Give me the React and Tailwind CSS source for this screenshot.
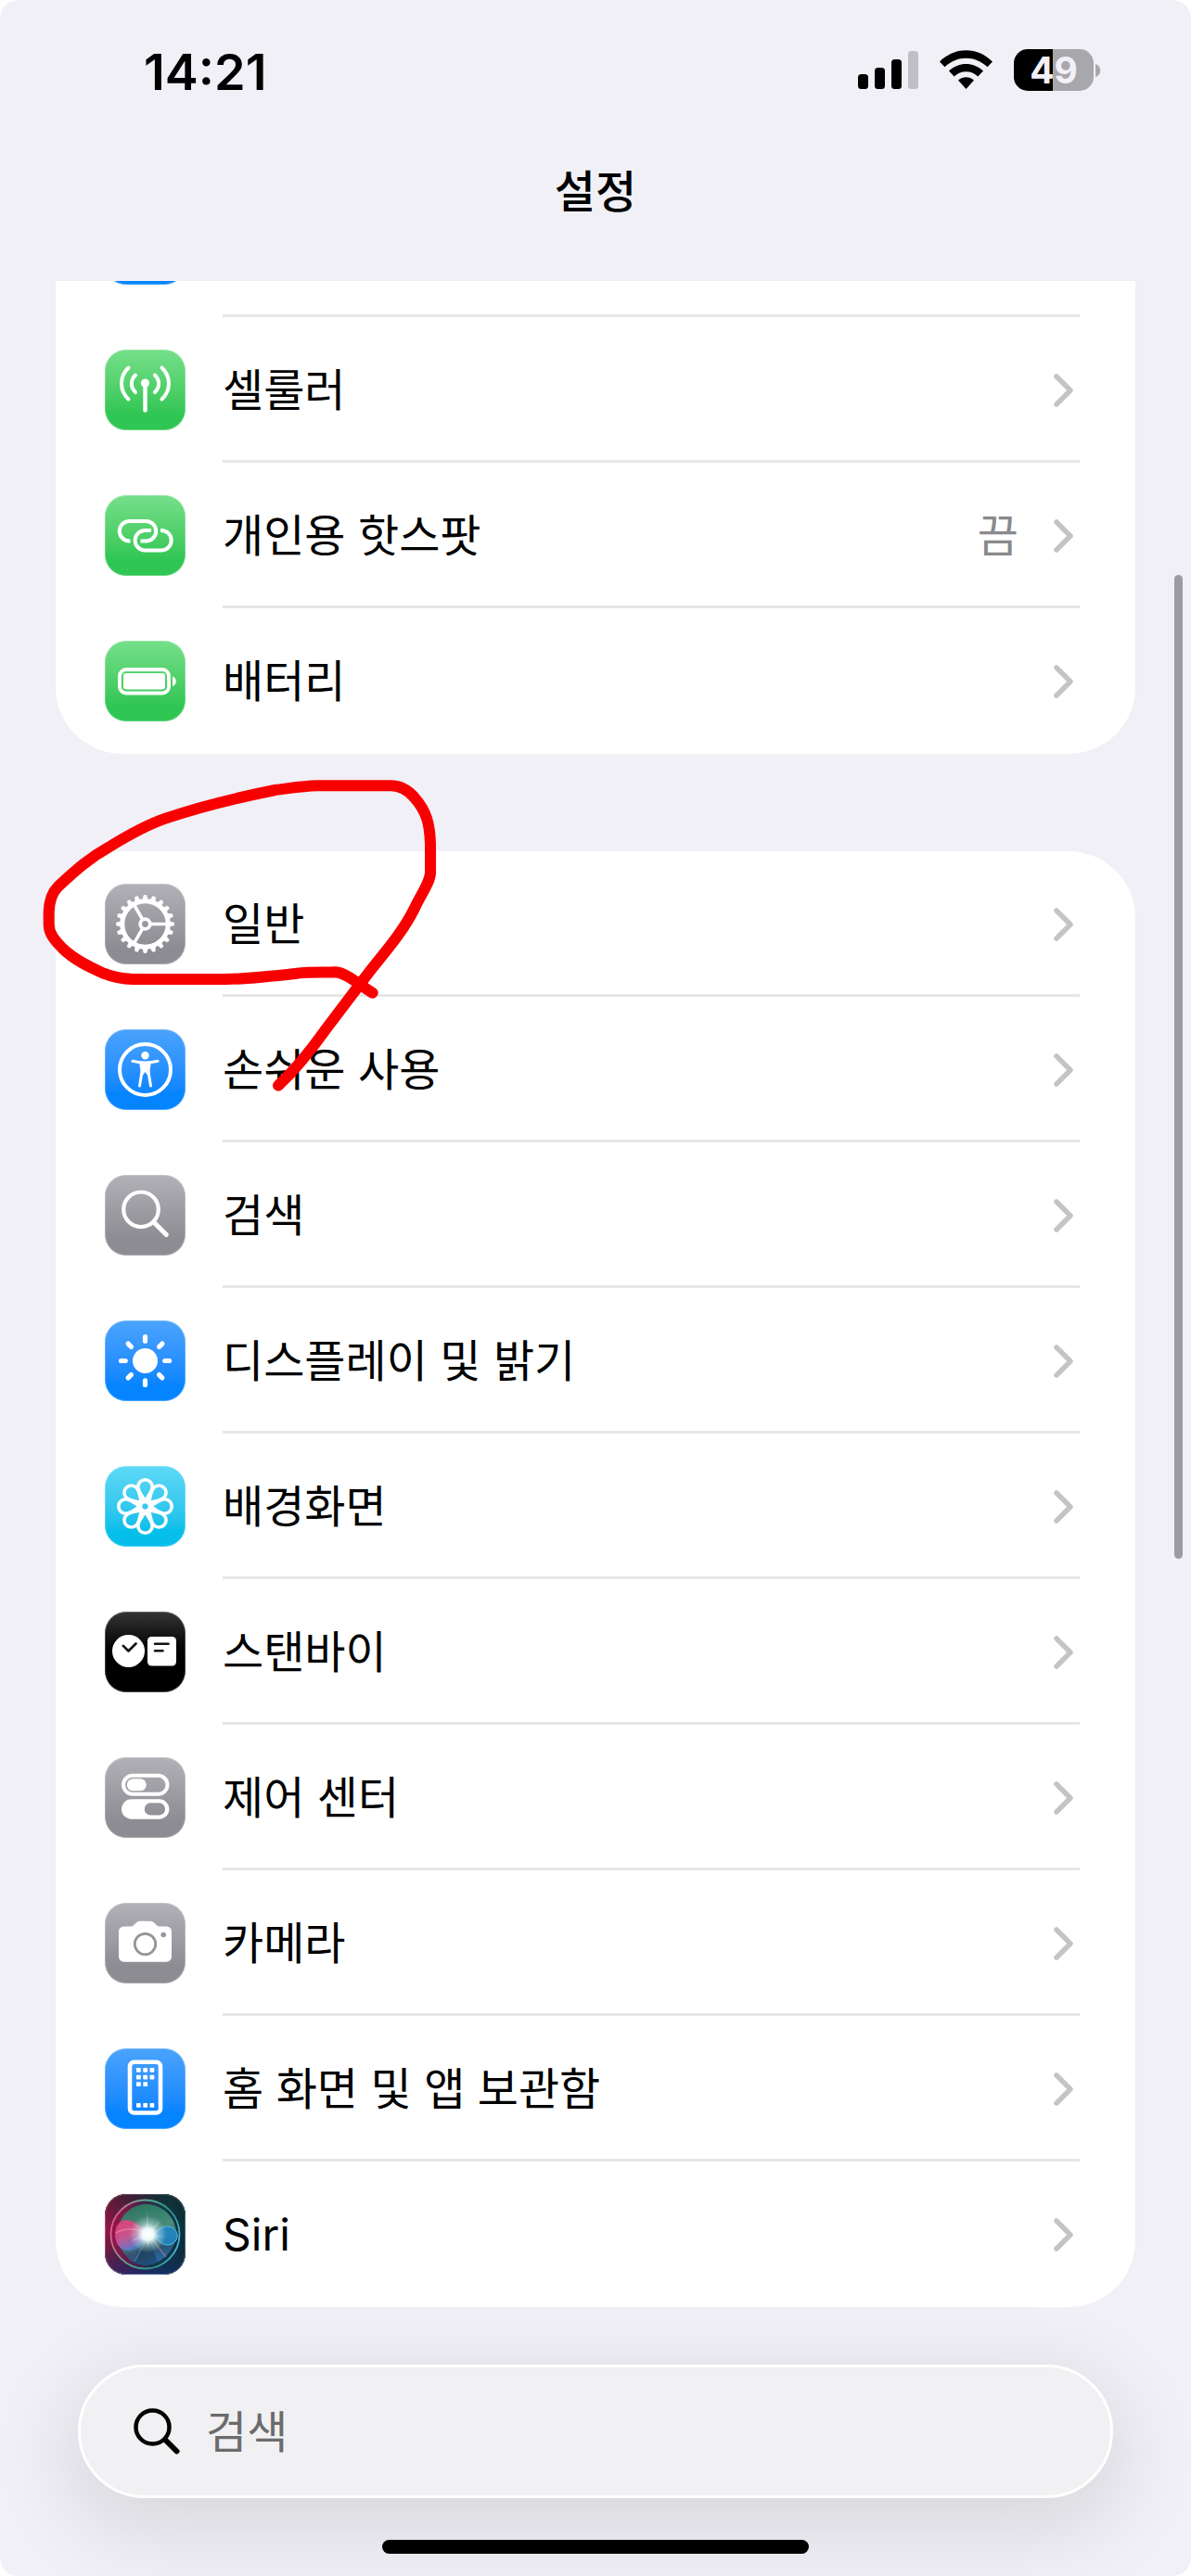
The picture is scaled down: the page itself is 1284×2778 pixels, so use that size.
import React from "react";

const EIGHTHS = [0, 45, 90, 135, 180, 225, 270, 315];
const TEETH = Array.from({ length: 20 }, (_, i) => i * 18);

const line = {
  fill: "none",
  stroke: "#fff",
  strokeWidth: 4,
  strokeLinecap: "round",
  strokeLinejoin: "round",
};

const TILE = {
  green: "bg-linear-to-b from-[#75df8a] to-[#2fc653] to-80%",
  gray: "bg-linear-to-b from-[#b2b1b7] to-[#8d8c92] to-80%",
  blue: "bg-linear-to-b from-[#4aa3fc] to-[#0584ff] to-80%",
  cyan: "bg-linear-to-b from-[#5cd9f6] to-[#05bfea] to-80%",
  black: "bg-linear-to-b from-[#363636] to-black to-70%",
  siri: "bg-black",
};

function Tile({ tone, children }) {
  return (
    <span className={`block size-[87px] shrink-0 overflow-hidden rounded-[23px] ${TILE[tone]}`}>
      <svg viewBox="0 0 87 87" className="size-full" aria-hidden="true">
        {children}
        <rect x="0.5" y="0.5" width="86" height="86" rx="22.5" fill="none" stroke="#fff" strokeOpacity="0.25" />
      </svg>
    </span>
  );
}

const Cellular = () => (
  <g {...line}>
    <circle cx="43.5" cy="36" r="4.6" fill="#fff" stroke="none" />
    <path d="M43.5 38V65.500" strokeWidth="4.5" />
    <path d="M25.500 19.500C15.500 29 15.500 44 25.500 53.500M61.500 19.500C71.500 29 71.500 44 61.500 53.500" />
    <path d="M33 27.500C27.500 33 27.500 40.500 33 46M54 27.500C59.500 33 59.500 40.500 54 46" />
  </g>
);

const Hotspot = () => (
  <g {...line} strokeLinecap="butt">
    <path d="M27.500 49.400H26.500A10.700 10.700 0 0 1 26.500 28H44.500A10.700 10.700 0 0 1 44.500 49.400H38.500" />
    <path d="M60 38H61A10.700 10.700 0 0 1 61 59.400H43.300A10.700 10.700 0 0 1 43.300 38H50" />
  </g>
);

const Battery = () => (
  <g>
    <rect x="16" y="31" width="53" height="25.500" rx="7" {...line} strokeWidth="3.8" />
    <rect x="20" y="35" width="45" height="17.500" rx="3" fill="#fff" />
    <path d="M73 38.500C78 40 78 47.500 73 49Z" fill="#fff" />
  </g>
);

const Gear = () => (
  <g transform="translate(43.500 43.500)" {...line} strokeLinecap="butt">
    <circle r="24.700" strokeWidth="5" />
    {TEETH.map((a) => (
      <path key={a} d="M26.500 -2.600L31 -1.500V1.500L26.500 2.600Z" fill="#fff" stroke="#fff" strokeWidth="0.6" transform={`rotate(${a})`} />
    ))}
    <circle r="5.300" strokeWidth="3.800" />
    {[0, 120, 240].map((a) => (
      <path key={a} d="M6.500 0H24" strokeWidth="3.600" transform={`rotate(${a})`} />
    ))}
  </g>
);

const Access = () => (
  <g>
    <circle cx="43.500" cy="43.500" r="27.500" {...line} />
    <circle cx="43.500" cy="28.300" r="4.200" fill="#fff" />
    <path
      d="M30 34.300C34 35.400 38 36 43.500 36S53 35.400 57 34.300M38.500 36.500C40.500 42 40 46 39.500 49L37.500 61M48.500 36.500C46.500 42 47 46 47.500 49L49.500 61"
      {...line}
      strokeWidth="3"
    />
    <path d="M38 35.500H49L47.500 49.500H46L43.500 46L41 49.500H39.500Z" fill="#fff" />
  </g>
);

const Search = () => (
  <g {...line}>
    <circle cx="39" cy="37.300" r="18.800" strokeWidth="4.200" />
    <path d="M52.800 51L66.300 64.500" strokeWidth="5" />
  </g>
);

const Sun = () => (
  <g transform="translate(43.500 43.500)" {...line}>
    <circle r="13.500" fill="#fff" stroke="none" />
    {EIGHTHS.map((a) => (
      <path key={a} d="M21.300 0H26" strokeWidth="5.200" transform={`rotate(${a})`} />
    ))}
  </g>
);

const Flower = () => (
  <g transform="translate(43.500 43.500)" {...line} strokeWidth="3.600">
    {EIGHTHS.map((a) => (
      <path
        key={a}
        d="M0 -5C-2.500 -11 -7.700 -15.500 -7.700 -21A7.700 7.700 0 0 1 7.700 -21C7.700 -15.500 2.500 -11 0 -5Z"
        transform={`rotate(${a})`}
      />
    ))}
    <circle r="5" />
  </g>
);

const Standby = () => (
  <g>
    <circle cx="25.500" cy="42.500" r="17.500" fill="#fff" />
    <rect x="46" y="27" width="31" height="31.500" rx="4.500" fill="#fff" />
    <path d="M19.800 36.800L25.500 42.500L33.500 34.500M54 34.700H68.500M54 42.200H62.500" {...line} stroke="#111" strokeWidth="2.600" />
  </g>
);

const Toggles = () => (
  <g>
    <rect x="20" y="19.800" width="47.500" height="20" rx="10" {...line} />
    <rect x="23.800" y="23.300" width="21" height="13" rx="6.500" fill="#fff" />
    <path
      fillRule="evenodd"
      fill="#fff"
      d="M28.700 45.300H58.700A10.700 10.700 0 0 1 58.700 66.700H28.700A10.700 10.700 0 0 1 28.700 45.300ZM49.300 49.300A6.600 6.600 0 0 0 49.300 62.500H58.500A6.600 6.600 0 0 0 58.500 49.300Z"
    />
  </g>
);

const Camera = () => (
  <g>
    <path
      fill="#fff"
      d="M20.500 25.500H28C32 25.500 33 19.700 38 19.700H49C54 19.700 55 25.500 59 25.500H66.500A5.500 5.500 0 0 1 72 31V58.200A5.500 5.500 0 0 1 66.500 63.700H20.500A5.500 5.500 0 0 1 15 58.200V31A5.500 5.500 0 0 1 20.500 25.500Z"
    />
    <circle cx="43.500" cy="44.500" r="11.200" fill="#fff" stroke="#95949a" strokeWidth="2.800" />
    <circle cx="63.200" cy="34.500" r="2.800" fill="#97969c" />
  </g>
);

const Phone = () => (
  <g fill="#fff">
    <rect x="27" y="14.700" width="33" height="54.800" rx="4.500" {...line} strokeWidth="4.600" />
    {[
      [34, 21], [41.300, 21], [48.500, 21],
      [34, 28.700], [41.300, 28.700], [48.500, 28.700],
      [34, 36.300], [41.300, 36.300],
      [34, 59], [41.300, 59], [48.500, 59],
    ].map(([x, y]) => (
      <rect key={`${x}-${y}`} x={x} y={y} width="4.800" height="4.800" rx="0.800" />
    ))}
  </g>
);

const Siri = () => (
  <g>
    <defs>
      <linearGradient id="siri-back" x1="0" y1="0.4" x2="1" y2="0.5">
        <stop offset="0" stopColor="#9c1446" />
        <stop offset="0.35" stopColor="#571c4c" />
        <stop offset="0.7" stopColor="#123a4a" />
        <stop offset="1" stopColor="#08303c" />
      </linearGradient>
      <linearGradient id="siri-base" x1="0" y1="0" x2="0" y2="1">
        <stop offset="0" stopColor="#12251f" stopOpacity="0.5" />
        <stop offset="0.45" stopColor="#12251f" stopOpacity="0" />
        <stop offset="1" stopColor="#152a70" stopOpacity="0.65" />
      </linearGradient>
      <linearGradient id="siri-green" x1="0.3" y1="0" x2="0.6" y2="1">
        <stop offset="0" stopColor="#23855f" />
        <stop offset="0.45" stopColor="#559985" />
        <stop offset="0.75" stopColor="#2c5c78" />
        <stop offset="1" stopColor="#2f74c4" />
      </linearGradient>
      <linearGradient id="siri-ring" x1="0" y1="0.3" x2="1" y2="0.6">
        <stop offset="0" stopColor="#ef6a95" />
        <stop offset="0.4" stopColor="#58c39a" />
        <stop offset="0.75" stopColor="#2f9f92" />
        <stop offset="1" stopColor="#59c8ee" />
      </linearGradient>
      <linearGradient id="siri-pink" x1="0" y1="0" x2="0.4" y2="1">
        <stop offset="0" stopColor="#e83a75" />
        <stop offset="0.6" stopColor="#cf5391" />
        <stop offset="1" stopColor="#6b74cc" />
      </linearGradient>
      <radialGradient id="siri-glow">
        <stop offset="0" stopColor="#fff" />
        <stop offset="0.32" stopColor="#f4ffff" stopOpacity="0.95" />
        <stop offset="0.6" stopColor="#cfeef0" stopOpacity="0.45" />
        <stop offset="1" stopColor="#cfeef0" stopOpacity="0" />
      </radialGradient>
    </defs>
    <rect width="87" height="87" fill="url(#siri-back)" />
    <rect width="87" height="87" fill="url(#siri-base)" />
    <circle cx="43.500" cy="43.500" r="37" fill="url(#siri-back)" stroke="url(#siri-ring)" strokeWidth="1.800" strokeOpacity="0.85" />
    <path d="M15 36C18 18 36 8 52 12C68 16 78 30 77 44C76 62 60 76 44 77C30 77 20 66 16 56Z" fill="url(#siri-green)" opacity="0.85" />
    <path d="M46 45L58 76C49 80 38 79 30 74Z" fill="#153149" opacity="0.45" />
    <path d="M46 45C34 52 20 60 14 52C18 66 36 66 46 45Z" fill="#4b83c9" opacity="0.7" />
    <path d="M46 44C38 32 26 25 17 30C9 35 9 52 17 58C27 64 38 54 46 44Z" fill="url(#siri-pink)" opacity="0.92" />
    <path d="M46 44C38 38 25 35 12 42" fill="none" stroke="#ff8fb4" strokeWidth="1.200" opacity="0.7" />
    <path d="M48 44C58 40 62 34 69 35C76 36 79 42 78 47C76 55 67 57 61 53C57 49 54 46 48 44Z" fill="#2187c4" fillOpacity="0.85" stroke="#56bff0" strokeWidth="1" />
    <path d="M47 45L32 73" stroke="#79b7e3" strokeWidth="1.200" opacity="0.5" />
    <path d="M48 45L66 68" stroke="#e78a9d" strokeWidth="1.400" opacity="0.5" />
    <path d="M46 18L47.500 40L60 28L50 43L64 46L50 47L46 58L44 47L28 51L42 43L31 32L44 40Z" fill="#e8ffff" opacity="0.25" />
    <circle cx="46.500" cy="43.500" r="20" fill="url(#siri-glow)" />
  </g>
);

const CONNECTIVITY = [
  { label: "셀룰러", tone: "green", Icon: Cellular },
  { label: "개인용 핫스팟", tone: "green", Icon: Hotspot, value: "끔" },
  { label: "배터리", tone: "green", Icon: Battery },
];

const GENERAL = [
  { label: "일반", tone: "gray", Icon: Gear },
  { label: "손쉬운 사용", tone: "blue", Icon: Access },
  { label: "검색", tone: "gray", Icon: Search },
  { label: "디스플레이 및 밝기", tone: "blue", Icon: Sun },
  { label: "배경화면", tone: "cyan", Icon: Flower },
  { label: "스탠바이", tone: "black", Icon: Standby },
  { label: "제어 센터", tone: "gray", Icon: Toggles },
  { label: "카메라", tone: "gray", Icon: Camera },
  { label: "홈 화면 및 앱 보관함", tone: "blue", Icon: Phone },
  { label: "Siri", tone: "siri", Icon: Siri },
];

function Row({ label, tone, Icon, value, last }) {
  return (
    <li>
      <button type="button" className="flex h-[157px] w-full items-center gap-10 pr-[60px] pl-[53px] text-left">
        <Tile tone={tone}>
          <Icon />
        </Tile>
        <span
          className={`flex h-full flex-1 items-center border-y-[3px] border-t-transparent pr-[7px] ${
            last ? "border-b-transparent" : "border-b-[#e6e6e6]"
          }`}
        >
          <span className="flex-1">{label}</span>
          {value && <span className="mr-[38px] text-[#8a8a8e]">{value}</span>}
          <svg viewBox="0 0 21 36" className="h-9 w-[21px]" aria-hidden="true">
            <path d="M3 3L18 18L3 33" fill="none" stroke="#c4c4c6" strokeWidth="5.500" strokeLinecap="round" strokeLinejoin="round" />
          </svg>
        </span>
      </button>
    </li>
  );
}

function Rows({ items }) {
  return (
    <ul>
      {items.map((item, i) => (
        <Row key={item.label} {...item} last={i === items.length - 1} />
      ))}
    </ul>
  );
}

function StatusBar() {
  return (
    <div className="flex h-[151px] items-center justify-between pr-[97px] pl-[155px]">
      <time className="pt-1 text-[54px] leading-none font-semibold">14:21</time>
      <div className="flex items-center">
        <svg viewBox="0 0 65 45" className="mr-[23px] h-[45px] w-[65px]" aria-hidden="true">
          <rect x="0" y="27" width="11" height="16" rx="3.500" />
          <rect x="18" y="20" width="11" height="23" rx="3.500" />
          <rect x="36" y="11" width="11" height="32" rx="3.500" />
          <rect x="54" y="2" width="11" height="41" rx="3.500" fill="#c0bfc5" />
        </svg>
        <svg viewBox="0 0 57 45" className="mr-[23px] h-[45px] w-[57px]" aria-hidden="true">
          <path d="M0 13.500C16 -3 41 -3 57 13.500L51.500 19.300C38.500 6.500 18.500 6.500 5.500 19.300Z" />
          <path d="M10 23.500C20.500 13.500 36.500 13.500 47 23.500L41.300 29.500C34 22.500 23 22.500 15.700 29.500Z" />
          <path d="M20 33.500C24.800 29 32.200 29 37 33.500L28.500 43Z" />
        </svg>
        <div className="flex items-center gap-[2px]">
          <div className="flex h-[45px] w-[86px] items-center justify-center rounded-[15px] bg-linear-to-r from-black from-49% to-[#a8a7ac] to-49% text-[39px] leading-none font-bold text-[#f2f1f6]">
            49
          </div>
          <svg viewBox="0 0 6 14" className="h-[14px] w-[6px]" aria-hidden="true">
            <path d="M0 0C7 2 7 12 0 14Z" fill="#a8a7ac" />
          </svg>
        </div>
      </div>
    </div>
  );
}

export default function App() {
  return (
    <div className="bg-white">
      <div className="relative overflow-hidden rounded-[20px] bg-[#f1f0f6] font-['Inter','Noto_Sans_CJK_KR',sans-serif] text-[48px] leading-none text-black">
        <StatusBar />
        <header className="flex h-[152px] items-center justify-center pb-10">
          <h1 className="font-medium">설정</h1>
        </header>

        <main className="flex flex-col gap-[105px] px-[60px]">
          <section className="overflow-hidden rounded-b-[72px] bg-white">
            <div className="flex h-[39px] items-end gap-10 overflow-hidden pr-[60px] pl-[53px]">
              <div className="pb-[35px]">
                <Tile tone="blue" />
              </div>
              <div className="flex-1 border-b-[3px] border-[#e6e6e6]" />
            </div>
            <Rows items={CONNECTIVITY} />
          </section>
          <section className="rounded-[72px] bg-white">
            <Rows items={GENERAL} />
          </section>
        </main>

        <footer className="flex flex-col items-center px-[84px] pt-[62px] pb-6">
          <label className="flex h-[144px] w-full items-center gap-7 rounded-full border-[3px] border-white bg-[#f1f1f3] px-[57px] shadow-[0_24px_90px_10px_rgba(0,0,0,0.11)]">
            <svg viewBox="0 0 50 50" className="size-[50px] shrink-0" aria-hidden="true">
              <g fill="none" stroke="#000" strokeLinecap="round">
                <circle cx="20.500" cy="20.500" r="18" strokeWidth="4.500" />
                <path d="M34 34L46.500 46.500" strokeWidth="6" />
              </g>
            </svg>
            <input
              type="search"
              aria-label="검색"
              placeholder="검색"
              className="h-20 min-w-0 flex-1 bg-transparent outline-none placeholder:text-[#6b6b6d]"
            />
          </label>
          <div className="mt-[45px] h-[15px] w-[460px] rounded-full bg-black" />
        </footer>

        <div className="absolute top-[620px] right-[9px] h-[1061px] w-[9px] rounded-full bg-[#9c9ba1]" />

        <svg
          viewBox="0 0 1440 1200"
          className="pointer-events-none absolute top-[820px] left-[30px] h-[400px] w-[480px]"
          aria-hidden="true"
        >
          <path
            d="M1115 752C1075 730 1035 688 995 685C960 687 915 684 870 689C800 697 710 707 640 708H340C305 707 275 701 245 689C195 667 150 645 112 608C85 580 68 560 68 530V490C69 455 76 430 98 408C155 355 200 315 260 282C320 245 380 210 445 188C550 152 680 120 800 96C850 90 890 83 935 82H1175C1205 82 1230 97 1250 120C1290 165 1300 205 1302 270V362C1302 395 1270 435 1250 480C1205 570 1140 635 1085 710L960 875C910 945 865 1000 810 1052"
            fill="none"
            stroke="#f90000"
            strokeWidth="36"
            strokeLinecap="round"
            strokeLinejoin="round"
          />
        </svg>
      </div>
    </div>
  );
}
